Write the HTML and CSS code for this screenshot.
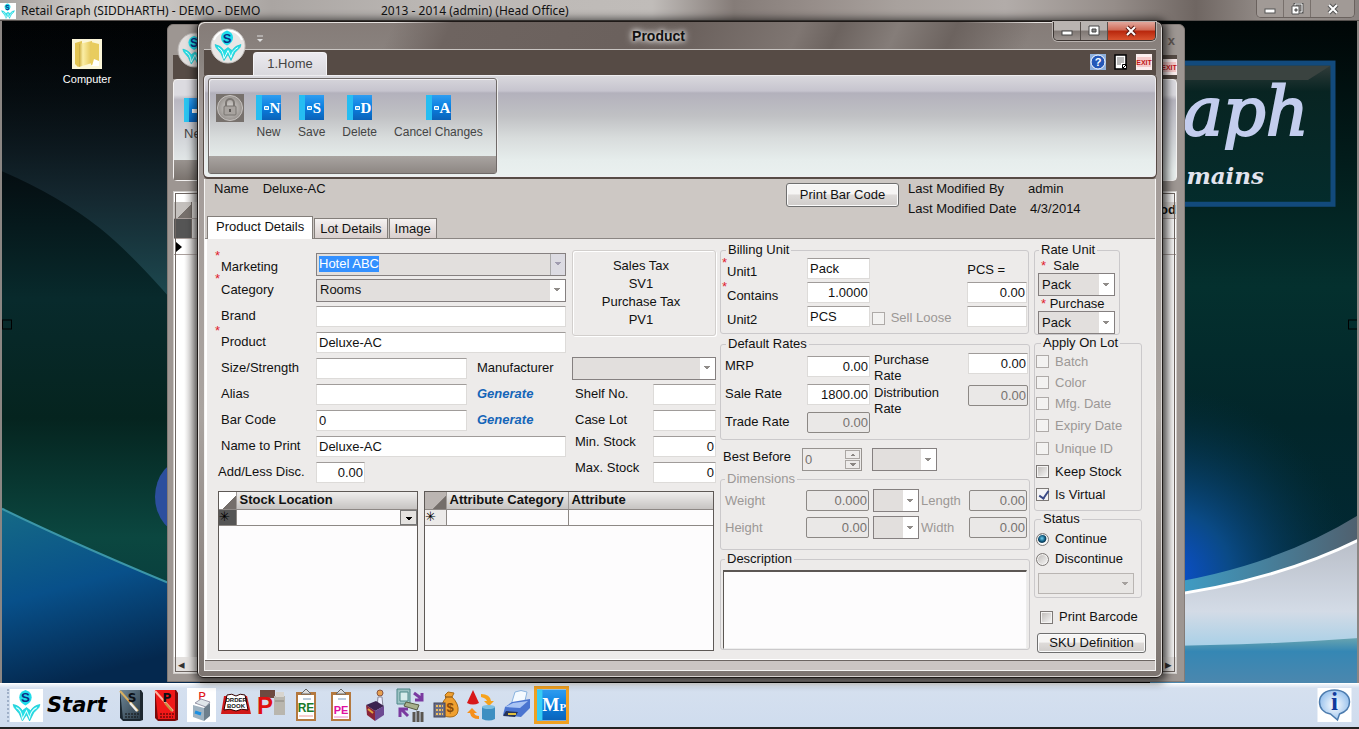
FILE: index.html
```html
<!DOCTYPE html>
<html lang="en">
<head>
<meta charset="utf-8">
<title>Retail Graph</title>
<link rel="stylesheet" href="styles.css">
</head>
<body>
<svg class="defs" aria-hidden="true">
  <defs>
    <linearGradient id="book" x1="0" y1="0" x2="0" y2="1"><stop offset="0" stop-color="#2f9df0"/><stop offset=".5" stop-color="#0a7fe0"/><stop offset="1" stop-color="#0b62b8"/></linearGradient>
    <linearGradient id="folder" x1="0" y1="0" x2="1" y2="0"><stop offset="0" stop-color="#c9a93a"/><stop offset=".3" stop-color="#fbeea6"/><stop offset="1" stop-color="#e3c452"/></linearGradient>
    <radialGradient id="coin"><stop offset="0" stop-color="#d9d6d3"/><stop offset="1" stop-color="#97928e"/></radialGradient>
    <linearGradient id="dark" x1="0" y1="0" x2="1" y2="1"><stop offset="0" stop-color="#6f8798"/><stop offset="1" stop-color="#2c3c48"/></linearGradient>
    <radialGradient id="bubble"><stop offset="0" stop-color="#ffffff"/><stop offset="1" stop-color="#9cc4ee"/></radialGradient>
    <symbol id="logo" viewBox="0 0 32 32">
      <path d="M15 1q6 2 6 7 0 5-6 8-6-3-6-8 0-5 6-7z" fill="#1fdcea"/>
      <path d="M3 15q6 1 9 6l4-3 4 3q3-5 9-6l-1 3-5 5-4 8-3-6-4 6-3-7-5-6z" fill="#27dfe6" stroke="#0cc0cc" stroke-width=".6"/>
      <path d="M6 18q5 2 6 11l4-8 3 7q1-7 7-10" fill="none" stroke="#eaffff"/>
      <text x="15" y="13" text-anchor="middle" class="logo-s">S</text>
    </symbol>
    <symbol id="help" viewBox="0 0 16 16"><rect width="16" height="16" fill="#8fb0dc"/><circle cx="8" cy="8" r="7" fill="#2458b8" stroke="#fff"/><text x="8" y="12" text-anchor="middle" class="t-help">?</text></symbol>
    <symbol id="exit" viewBox="0 0 16 16"><rect width="16" height="16" fill="#fbeeee"/><path d="M1 3h14v10H1z" fill="#f6caca"/><text x="8" y="11" text-anchor="middle" class="t-exit">EXIT</text></symbol>
  </defs>
</svg>

<header class="appbar">
  <svg class="appbar-logo"><rect width="100%" height="100%" fill="#fff"/><use href="#logo"/></svg>
  <span class="appbar-name">Retail Graph (SIDDHARTH) - DEMO - DEMO</span>
  <span class="appbar-year">2013 - 2014 (admin) (Head Office)</span>
  <div class="winctl winctl-dim">
    <button aria-label="Minimize"><svg viewBox="0 0 14 12"><rect x="2" y="6" width="10" height="4" fill="#fff" stroke="#555"/></svg></button>
    <button aria-label="Restore"><svg viewBox="0 0 14 12"><path d="M5 1h7v8H5z" fill="none" stroke="#555" stroke-width="3"/><path d="M5 1h7v8H5z" fill="none" stroke="#fff"/><path d="M2 3h7v8H2z" fill="#fff" stroke="#555"/><path d="M5 6h2v2H5z" fill="#888" stroke="#555"/></svg></button>
    <button aria-label="Close"><svg viewBox="0 0 14 12"><path d="M3 2l8 8M11 2l-8 8" stroke="#555" stroke-width="4"/><path d="M3 2l8 8M11 2l-8 8" stroke="#fff" stroke-width="2"/></svg></button>
  </div>
</header>

<main class="desktop">
  <svg class="wallpaper" viewBox="0 0 1359 661" preserveAspectRatio="none" aria-hidden="true">
    <defs>
      <linearGradient id="w1" x1="0" y1="0" x2="0" y2="1"><stop offset="0" stop-color="#010304"/><stop offset=".2" stop-color="#04090d"/><stop offset=".42" stop-color="#082a2c"/><stop offset=".6" stop-color="#05241f"/><stop offset=".78" stop-color="#0b4740"/><stop offset="1" stop-color="#06303a"/></linearGradient>
      <linearGradient id="w2" x1="0" y1="0" x2="0" y2="1"><stop offset="0" stop-color="#04080b" stop-opacity="0"/><stop offset=".55" stop-color="#14262e"/><stop offset="1" stop-color="#20555c"/></linearGradient>
      <linearGradient id="w3" x1="0" y1="0" x2=".3" y2="1"><stop offset="0" stop-color="#156a86"/><stop offset=".5" stop-color="#08508a"/><stop offset="1" stop-color="#04284e"/></linearGradient>
      <linearGradient id="w4" x1="0" y1="0" x2="0" y2="1"><stop offset="0" stop-color="#000606"/><stop offset=".4" stop-color="#04302e"/><stop offset=".6" stop-color="#02262a"/><stop offset="1" stop-color="#012a3c"/></linearGradient>
      <radialGradient id="w5" gradientUnits="userSpaceOnUse" cx="1165" cy="555" r="190"><stop offset="0" stop-color="#0b50d8"/><stop offset=".35" stop-color="#0a4a86"/><stop offset="1" stop-color="#04303f" stop-opacity="0"/></radialGradient>
      <linearGradient id="w6" x1="0" y1="0" x2="0" y2="1"><stop offset="0" stop-color="#b9bec8"/><stop offset=".5" stop-color="#d3dbe6"/><stop offset="1" stop-color="#7cc4e8"/></linearGradient>
      <linearGradient id="w7" x1="0" y1="0" x2="0" y2="1"><stop offset="0" stop-color="#68a4b0"/><stop offset=".3" stop-color="#3587b4"/><stop offset="1" stop-color="#4b87ae"/></linearGradient>
      <linearGradient id="w8" x1="0" y1="0" x2="1" y2="0"><stop offset="0" stop-color="#3ba7d4"/><stop offset="1" stop-color="#50606e"/></linearGradient>
      <linearGradient id="w9" x1="0" y1="0" x2="0" y2="1"><stop offset="0" stop-color="#343e3c"/><stop offset=".2" stop-color="#082422"/><stop offset="1" stop-color="#042c2c"/></linearGradient>
    </defs>
    <rect width="200" height="661" fill="url(#w1)"/>
    <path d="M2 150Q60 175 100 207T200 312V0H2z" fill="url(#w2)"/>
    <path d="M2 487Q80 525 200 574V661H2z" fill="url(#w3)"/>
    <path d="M2 487Q80 525 200 574" fill="none" stroke="#3c96a8" stroke-width="2"/>
    <ellipse cx="187" cy="475" rx="32" ry="38" fill="#2c4f9e"/>
    <rect x="1150" width="209" height="661" fill="url(#w4)"/>
    <rect x="1150" y="280" width="209" height="381" fill="url(#w5)"/>
    <rect x="1000" y="42" width="333" height="141" fill="url(#w9)" stroke="#124a7c" stroke-width="5"/>
    <path d="M1000 45h330l-22 14h-308z" fill="#3a4340"/>
    <path d="M1150 564Q1270 548 1359 493V661H1150z" fill="url(#w8)"/>
    <path d="M1150 576Q1270 562 1359 518V661H1150z" fill="url(#w6)"/>
    <path d="M1150 576Q1270 562 1359 518" fill="none" stroke="#fff" stroke-width="3"/>
    <path d="M1150 624Q1250 624 1359 616V661H1150z" fill="url(#w7)"/>
    <text x="1309" y="114" text-anchor="end" class="brand-big">aph</text>
    <text x="1264" y="163" text-anchor="end" class="brand-small">mains</text>
    <path d="M2.500 298.500h9v9h-9zM1348.500 298.500h9v9h-9z" fill="none" stroke="#000"/>
    <path d="M1 0v661M1358 0v661" stroke="#8b8683" stroke-width="2"/>
  </svg>

  <a class="shortcut" href="#computer">
    <svg viewBox="0 0 30 30"><rect width="30" height="30" fill="#fbf6d8"/><path d="M3 4l7-2v24l-4 2-3-3z" fill="#e2c452"/><path d="M7 5l13-3v22l-13 4z" fill="url(#folder)"/><path d="M19 3l8 2v20l-8 1z" fill="#e8cc5e"/><path d="M22 20l5 2v5h-7z" fill="#fff"/></svg>
    <span>Computer</span>
  </a>

  <section class="window window-back" aria-label="List">
    <div class="back-title"><span class="back-x">x</span></div>
    <svg class="back-orb" viewBox="0 0 36 36"><circle cx="18" cy="18" r="17" fill="#e3e0df" stroke="#b8b4b1"/><use href="#logo" x="3" y="2" width="30" height="32"/></svg>
    <div class="back-strip"><svg class="ico16"><use href="#exit"/></svg></div>
    <div class="back-ribbon">
      <div class="back-ribbon-tool"><svg viewBox="0 0 24 24"><rect width="24" height="24" fill="url(#book)"/><rect width="5" height="24" fill="#2bc4f0"/><path d="M8 11h5v4H8z" fill="#fff"/></svg><span>New</span></div>
      <div class="back-ribbon-cap"></div>
    </div>
    <div class="back-list">
      <div class="back-row back-head"><i></i><span>od</span></div>
      <div class="back-row back-filter"><i></i><span></span></div>
      <div class="back-row back-cursor"><i></i><span></span></div>
      <div class="back-scroll"><span>◂</span><span>▸</span></div>
    </div>
  </section>

  <section class="window window-front" aria-label="Product">
    <svg class="orb" viewBox="0 0 36 36"><circle cx="18" cy="18" r="17" fill="#e9e7e6" stroke="#c9c5c2"/><path d="M4 12a15 15 0 0 1 28 0" fill="none" stroke="#fff" stroke-width="2"/><use href="#logo" x="2" y="1" width="32" height="33"/></svg>
    <div class="titlebar">
      <svg class="qat" viewBox="0 0 8 8"><path d="M1 1h6" stroke="#ddd"/><path d="M1 4h6L4 7z" fill="#ddd"/></svg>
      <h1>Product</h1>
      <div class="winctl">
        <button aria-label="Minimize"><svg viewBox="0 0 14 12"><rect x="2" y="6" width="10" height="4" fill="#fff" stroke="#444"/></svg></button>
        <button aria-label="Maximize"><svg viewBox="0 0 14 12"><path d="M2 1h10v9H2z" fill="#fff" stroke="#444"/><path d="M5 4h4v3H5z" fill="#888" stroke="#444"/></svg></button>
        <button class="close" aria-label="Close"><svg viewBox="0 0 14 12"><path d="M3 2l8 8M11 2l-8 8" stroke="#5b1a12" stroke-width="4"/><path d="M3 2l8 8M11 2l-8 8" stroke="#fff" stroke-width="2"/></svg></button>
      </div>
    </div>
    <div class="strip">
      <button class="ribbon-tab">1.Home</button>
      <div class="strip-icons">
        <svg class="ico16"><use href="#help"/></svg>
        <svg class="ico16" viewBox="0 0 16 16"><path d="M2 1h11v14H2z" fill="#fff" stroke="#000" stroke-width="1.500"/><path d="M4 4h7M4 6h7M4 8h7M4 10h4" stroke="#777"/><path d="M9.500 10.500h4v4h-4z" fill="#fff" stroke="#000"/><path d="M10 14l3-3" stroke="#000"/></svg>
        <svg class="ico16"><use href="#exit"/></svg>
      </div>
    </div>
    <div class="ribbon">
      <div class="group">
        <div class="tools">
          <svg class="lock" viewBox="0 0 28 28"><rect width="28" height="28" fill="#77716d"/><circle cx="14" cy="14" r="12.500" fill="url(#coin)" stroke="#c8c4c1"/><path d="M10 13V9a4 4 0 0 1 8 0v4" fill="none" stroke="#7b7672" stroke-width="2"/><rect x="8" y="12" width="12" height="9" rx="1" fill="#a8a39f" stroke="#77726e"/><path d="M14 15v3" stroke="#5c5855" stroke-width="2"/></svg>
          <button class="tool"><svg viewBox="0 0 25 25"><rect width="25" height="25" fill="url(#book)"/><rect width="6" height="25" fill="#25bdf2"/><path d="M8.500 11.500h4v3h-4z" fill="#5ab4f5" stroke="#fff"/><text x="19" y="18" text-anchor="middle" class="t-book">N</text></svg>New</button>
          <button class="tool"><svg viewBox="0 0 25 25"><rect width="25" height="25" fill="url(#book)"/><rect width="6" height="25" fill="#25bdf2"/><path d="M8.500 11.500h4v3h-4z" fill="#5ab4f5" stroke="#fff"/><text x="18" y="18" text-anchor="middle" class="t-book">S</text></svg>Save</button>
          <button class="tool"><svg viewBox="0 0 25 25"><rect width="25" height="25" fill="url(#book)"/><rect width="6" height="25" fill="#25bdf2"/><path d="M8.500 11.500h4v3h-4z" fill="#5ab4f5" stroke="#fff"/><text x="19" y="18" text-anchor="middle" class="t-book">D</text></svg>Delete</button>
          <button class="tool"><svg viewBox="0 0 25 25"><rect width="25" height="25" fill="url(#book)"/><rect width="6" height="25" fill="#25bdf2"/><path d="M8.500 11.500h4v3h-4z" fill="#5ab4f5" stroke="#fff"/><text x="19" y="18" text-anchor="middle" class="t-book">A</text></svg>Cancel Changes</button>
        </div>
        <div class="group-cap"></div>
      </div>
    </div>

    <div class="client">
      <div class="head">
        <div class="head-left">
          <p class="head-name"><span>Name</span><span>Deluxe-AC</span></p>
          <div class="tabs" role="tablist">
            <button class="tab tab-on" role="tab" aria-selected="true">Product Details</button>
            <button class="tab" role="tab">Lot Details</button>
            <button class="tab" role="tab">Image</button>
          </div>
        </div>
        <div class="head-right">
          <button class="btn btn-print">Print Bar Code</button>
          <dl class="modified"><dt>Last Modified By</dt><dd>admin</dd><dt>Last Modified Date</dt><dd>4/3/2014</dd></dl>
        </div>
      </div>

      <form class="panel">
        <div class="col-main">
          <div class="fields">
            <label class="l low" for="mk"><b class="req">*</b>Marketing</label>
            <div class="combo wide"><input id="mk" value="Hotel ABC" autofocus><button type="button" aria-label="Open list"></button></div>
            <div class="tax"><span>Sales Tax</span><span>SV1</span><span>Purchase Tax</span><span>PV1</span></div>

            <label class="l" for="cat"><b class="req">*</b>Category</label>
            <select id="cat" class="sel wide"><option>Rooms</option></select>

            <label class="l" for="br">Brand</label><input id="br" class="in wide">
            <label class="l" for="pr"><b class="req">*</b>Product</label><input id="pr" class="in wide" value="Deluxe-AC">

            <label class="l" for="sz">Size/Strength</label><input id="sz" class="in">
            <label class="mid" for="mf">Manufacturer</label><select id="mf" class="sel span2"><option></option></select>

            <label class="l" for="al">Alias</label><input id="al" class="in">
            <a class="mid gen" href="#alias">Generate</a><label class="r" for="sh">Shelf No.</label><input id="sh" class="in">

            <label class="l" for="bc">Bar Code</label><input id="bc" class="in" value="0">
            <a class="mid gen" href="#barcode">Generate</a><label class="r" for="cl">Case Lot</label><input id="cl" class="in">

            <label class="l" for="np">Name to Print</label><input id="np" class="in wide" value="Deluxe-AC">
            <label class="r high" for="mi">Min. Stock</label><input id="mi" class="in num" value="0">

            <label class="l l-out" for="ad">Add/Less Disc.</label><input id="ad" class="in num disc" value="0.00">
            <label class="r high" for="ma">Max. Stock</label><input id="ma" class="in num" value="0">
          </div>
          <div class="grids">
            <div class="sheet">
              <table><thead><tr><th class="corner corner-w"></th><th>Stock Location</th></tr></thead>
              <tbody><tr><td class="star star-on">✳</td><td class="cell-drop"><button type="button" class="drop" aria-label="Choose location"></button></td></tr></tbody></table>
            </div>
            <div class="sheet">
              <table><thead><tr><th class="corner"></th><th class="cat">Attribute Category</th><th>Attribute</th></tr></thead>
              <tbody><tr><td class="star">✳</td><td></td><td></td></tr></tbody></table>
            </div>
          </div>
        </div>

        <div class="col-rates">
          <fieldset class="fs billing"><legend>Billing Unit</legend>
            <label for="u1"><b class="req">*</b>Unit1</label><input id="u1" class="in" value="Pack"><span></span><label class="pcs" for="pc">PCS =</label>
            <label for="co"><b class="req">*</b>Contains</label><input id="co" class="in num" value="1.0000"><span></span><input id="pc" class="in num" value="0.00">
            <label for="u2">Unit2</label><input id="u2" class="in" value="PCS"><label class="chk off"><input type="checkbox" disabled>Sell Loose</label><input class="in" aria-label="Loose unit">
          </fieldset>
          <fieldset class="fs rates"><legend>Default Rates</legend>
            <div class="rates-l">
              <label for="mrp">MRP</label><input id="mrp" class="in num" value="0.00">
              <label for="sr">Sale Rate</label><input id="sr" class="in num" value="1800.00">
              <label for="tr">Trade Rate</label><input id="tr" class="in num" value="0.00" disabled>
            </div>
            <div class="rates-r">
              <label for="pur">Purchase Rate</label><input id="pur" class="in num" value="0.00">
              <label for="dis">Distribution Rate</label><input id="dis" class="in num" value="0.00" disabled>
            </div>
          </fieldset>
          <div class="best">
            <label for="bb">Best Before</label>
            <div class="spin"><input id="bb" value="0" disabled><div><button type="button" aria-label="Up" disabled></button><button type="button" aria-label="Down" disabled></button></div></div>
            <select class="sel" aria-label="Period"><option></option></select>
          </div>
          <fieldset class="fs dims off"><legend>Dimensions</legend>
            <label for="we">Weight</label><input id="we" class="in num" value="0.000" disabled><select class="sel" aria-label="Weight unit"><option></option></select><label for="le">Length</label><input id="le" class="in num" value="0.00" disabled>
            <label for="he">Height</label><input id="he" class="in num" value="0.00" disabled><select class="sel" aria-label="Height unit"><option></option></select><label for="wi">Width</label><input id="wi" class="in num" value="0.00" disabled>
          </fieldset>
          <fieldset class="fs desc"><legend>Description</legend><textarea aria-label="Description"></textarea></fieldset>
        </div>

        <div class="col-side">
          <fieldset class="fs unit"><legend>Rate Unit</legend>
            <label for="us"><b class="star-in">*</b>&nbsp; Sale</label><select id="us" class="sel"><option>Pack</option></select>
            <label for="up"><b class="star-in">*</b> Purchase</label><select id="up" class="sel"><option>Pack</option></select>
          </fieldset>
          <fieldset class="fs lot"><legend>Apply On Lot</legend>
            <label class="chk off"><input type="checkbox" disabled>Batch</label>
            <label class="chk off"><input type="checkbox" disabled>Color</label>
            <label class="chk off"><input type="checkbox" disabled>Mfg. Date</label>
            <label class="chk off"><input type="checkbox" disabled>Expiry Date</label>
            <label class="chk off"><input type="checkbox" disabled>Unique ID</label>
            <label class="chk"><input type="checkbox">Keep Stock</label>
            <label class="chk"><input type="checkbox" checked>Is Virtual</label>
          </fieldset>
          <fieldset class="fs status"><legend>Status</legend>
            <label class="chk"><input type="radio" name="st" checked>Continue</label>
            <label class="chk"><input type="radio" name="st">Discontinue</label>
            <select class="sel sel-flat" aria-label="Reason" disabled><option></option></select>
          </fieldset>
          <label class="chk print"><input type="checkbox">Print Barcode</label>
          <button type="button" class="btn">SKU Definition</button>
        </div>
      </form>
      <div class="statusbar"></div>
    </div>
  </section>
</main>

<footer class="taskbar">
  <button class="start"><svg class="start-logo" viewBox="0 0 33 33"><rect width="33" height="33" fill="#fff"/><use href="#logo" width="33" height="33"/></svg>Start</button>
  <nav class="tasks">
    <button aria-label="Sales invoice"><svg viewBox="0 0 32 34"><path d="M5 2h21l2 3v27l-3 1H8l-3-3z" fill="#1c2730"/><path d="M5 2h20v29H8z" fill="url(#dark)"/><path d="M5 3l18 20" stroke="#d8b060" stroke-width="2"/><path d="M15 15l7 8" stroke="#eee" stroke-width="2"/><text x="17" y="14" text-anchor="middle" class="t-s">S</text><path d="M10 26h14M10 29h13" stroke="#111" stroke-dasharray="2 1"/></svg></button>
    <button aria-label="Purchase invoice"><svg viewBox="0 0 32 34"><path d="M5 2h21l2 3v27l-3 1H8l-3-3z" fill="#7a0a0a"/><path d="M5 2h20v29H8z" fill="#f01818"/><path d="M5 3l18 20" stroke="#ffb0a0" stroke-width="2"/><path d="M15 15l7 8" stroke="#c89040" stroke-width="2"/><text x="17" y="14" text-anchor="middle" class="t-s">P</text><path d="M10 26h14M10 29h13" stroke="#300" stroke-dasharray="2 1"/></svg></button>
    <button aria-label="Purchase bill"><svg viewBox="0 0 32 34"><rect x="2" width="29" height="34" fill="#fff"/><text x="17" y="13" text-anchor="middle" class="t-p">P</text><path d="M10 15l6-4 9 3-4 5z" fill="#dfe6ea" stroke="#99a"/><path d="M8 17l11 3v13l-11-4z" fill="#9fb2c0"/><path d="M19 20l6-5v13l-6 5z" fill="#6d7f8c"/><path d="M10 24l6 2" stroke="#1c8fe0" stroke-width="3"/></svg></button>
    <button aria-label="Order book"><svg viewBox="0 0 32 34"><path d="M4 8h23l4 18H1z" fill="#d01818"/><path d="M7 7q5-2 9 1 4-3 9-1l3 15q-7-2-12 1-6-3-12-1z" fill="#fff" stroke="#300"/><text x="16" y="14" text-anchor="middle" class="t-xs">ORDER</text><text x="16" y="20" text-anchor="middle" class="t-xs">BOOK</text></svg></button>
    <button aria-label="Purchase return"><svg viewBox="0 0 32 34"><path d="M5 2h15v8H5z" fill="#6e4a40"/><path d="M19 8h11v19H19z" fill="#b9b6ae"/><path d="M21 4h8v5h-8z" fill="#d8d5cf"/><path d="M20 13h9" stroke="#8a867e"/><text x="10" y="26" text-anchor="middle" class="t-pbig">P</text></svg></button>
    <button aria-label="Receipt entry"><svg viewBox="0 0 32 34"><rect x="6" y="4" width="20" height="29" fill="#b4793f"/><rect x="8" y="7" width="16" height="24" fill="#fff"/><path d="M11 6l5-5 5 5z" fill="#ddd" stroke="#666"/><path d="M13 11h8" stroke="#bcd" stroke-width="2"/><text x="16" y="24" text-anchor="middle" class="t-re">RE</text><path d="M9 28h14" stroke="#e99"/></svg></button>
    <button aria-label="Payment entry"><svg viewBox="0 0 32 34"><rect x="6" y="4" width="20" height="29" fill="#b4793f"/><rect x="8" y="7" width="16" height="24" fill="#fff"/><path d="M11 6l5-5 5 5z" fill="#ddd" stroke="#666"/><path d="M13 11h8" stroke="#bcd" stroke-width="2"/><text x="16" y="26" text-anchor="middle" class="t-pe">PE</text><path d="M9 29h14" stroke="#e8c"/></svg></button>
    <button aria-label="Cash box"><svg viewBox="0 0 32 34"><circle cx="20" cy="5" r="3" fill="#e6a050" stroke="#854"/><path d="M18 9h4l1 10h-6z" fill="#eef" stroke="#889"/><path d="M6 17l10-4 8 5-9 5z" fill="#3b2350"/><path d="M6 17l9 6v10l-8-6z" fill="#8a2438"/><path d="M15 23l9-5v9l-9 6z" fill="#6d4a92"/><path d="M8 21l5 4" stroke="#e0a040" stroke-width="2"/></svg></button>
    <button aria-label="Stock transfer"><svg viewBox="0 0 32 34"><path d="M2 1h13v15H2z" fill="#9cc3c4" stroke="#4d8788"/><path d="M5 4h8v9H5z" fill="#d7ecec" stroke="#4d8788"/><path d="M19 5l8 6m0-6v7h-7" fill="none" stroke="#7a3aa0" stroke-width="3"/><path d="M13 28l-6-6m-2 7v-8h8" fill="none" stroke="#7a3aa0" stroke-width="3"/><path d="M11 14l13 3-2 5-13-4z" fill="#a7b08c" stroke="#565c40"/><path d="M19 24v10M23 23v11M27 24v10" stroke="#5a5650" stroke-width="3"/></svg></button>
    <button aria-label="Accounts"><svg viewBox="0 0 32 34"><path d="M15 7l3-3 6 1-2 4q7 7 6 14-1 6-8 6t-9-5q0-9 5-14z" fill="#f0a030" stroke="#a86a14"/><path d="M15 9h7" stroke="#7a4a10"/><text x="20" y="24" text-anchor="middle" class="t-d">$</text><rect x="4" y="15" width="11" height="14" fill="#6b6e86" stroke="#44465a"/><path d="M6 18h7M6 22h7M6 26h7" stroke="#f0c060" stroke-width="2" stroke-dasharray="2 1"/></svg></button>
    <button aria-label="Shapes"><svg viewBox="0 0 32 34"><path d="M8 2l6 13q-6 3-12 0z" fill="#d81818"/><path d="M16 6q9 0 10 7h3l-5 5-5-5h3q-1-3-6-4z" fill="#f6a21c"/><path d="M14 31q-8 0-9-6H2l5-5 5 5H9q1 3 5 3z" fill="#f6901c"/><path d="M17 19q6-3 13 0v12q-6 3-13 0z" fill="#3e8fc2"/><ellipse cx="23.500" cy="19" rx="6.500" ry="2" fill="#7cbfe2"/></svg></button>
    <button aria-label="Print"><svg viewBox="0 0 32 34"><path d="M15 4q6-3 12 0l-3 13H11z" fill="#f4faff" stroke="#8ab4e0"/><path d="M5 19l7-5 18-3v9l-9 9-18-2z" fill="#4a74d0"/><path d="M5 19l8-4 15-2-8 7z" fill="#a9c4f4"/><path d="M6 23l12 1-3 5-12-1z" fill="#26345c"/><path d="M8 26l8 0" stroke="#e0c040" stroke-width="2"/></svg></button>
    <button class="active" aria-label="Product master"><svg viewBox="0 0 32 34"><rect width="32" height="34" fill="url(#book)"/><rect width="6" height="34" fill="#36cdf4"/><text x="19" y="24" text-anchor="middle" class="t-mp">M<tspan class="t-mp-s">P</tspan></text></svg></button>
  </nav>
  <button class="info" aria-label="Information"><svg viewBox="0 0 34 34"><rect width="34" height="34" fill="#fff"/><path d="M17 2c9 0 15 5 15 12 0 6-4 10-10 12l-2 6-7-6C6 25 2 20 2 14 2 7 8 2 17 2z" fill="url(#bubble)" stroke="#4d7cae" stroke-width="1.500"/><text x="17" y="22" text-anchor="middle" class="t-i">i</text></svg></button>
</footer>
<script src="app.js"></script>
</body>
</html>
```
FILE: app.js
```js
const first = document.getElementById("mk");
first.focus();
first.select();
```
FILE: styles.css
```css
* { box-sizing: border-box; }
body {
  margin: 0; min-height: 100vh; display: flex; flex-direction: column;
  font: 13px/16px "Liberation Sans", Arial, sans-serif; color: #111; background: #000;
}
button, input, select, textarea { font: inherit; color: inherit; margin: 0; padding: 0; border-radius: 0; min-width: 0; }
button { border: 0; background: none; }
.defs { position: absolute; width: 0; height: 0; }

/* application bar */
.appbar {
  display: flex; align-items: center; height: 21px; padding-right: 4px;
  font: 12px/20px "Noto Sans", "Open Sans", sans-serif;
  background: linear-gradient(90deg, #a8a4a1 0, #d8d5d2 8%, #aaa5a2 20%, #bcb8b5 32%, #c0bcb9 48%, #857c78 54%, #978e8a 60%, #a8a19d 66%, #b2aca9 74%, #958d89 82%, #6f6662 88%, #9a938f 94%, #8a8380 100%);
  box-shadow: inset 0 -1px #55504d;
}
.appbar-logo { width: 16px; height: 16px; margin-right: 5px; }
.appbar-name { width: 360px; white-space: nowrap; }
.appbar-year { flex: 1; white-space: nowrap; }
.winctl { display: flex; align-self: flex-start; height: 19px; border: 1px solid #3c3532; border-top: 0; border-radius: 0 0 5px 5px; overflow: hidden; box-shadow: 0 0 0 1px #b9b3b0; }
.winctl button { width: 27px; display: grid; place-items: center; border-right: 1px solid #57504c; background: linear-gradient(#b9b4b1 0 45%, #7f7773 50%, #9d9591); }
.winctl button:last-child { width: 47px; border-right: 0; }
.winctl svg { width: 14px; height: 12px; }
.winctl .close { background: linear-gradient(#e0a195 0 5%, #cf6a56 45%, #b8260c 50%, #d9532f); }
.winctl-dim { height: 18px; border-color: #6a625e; box-shadow: none; }
.winctl-dim button { background: #a19a96; border-color: #78706c; }
.winctl-dim button:last-child { width: 43px; }

/* desktop */
.desktop { position: relative; flex: 1; display: flex; flex-direction: column; padding: 0 196px 5px 197px; }
.wallpaper { position: absolute; inset: 0; width: 100%; height: 100%; }
.brand-big { font: italic 67px "DejaVu Serif", serif; fill: #c3cdee; stroke: #c3cdee; stroke-width: 2px; }
.brand-small { font: italic bold 23px "DejaVu Serif", serif; fill: #e2e4ee; }
.shortcut { position: absolute; left: 50px; top: 18px; width: 74px; display: flex; flex-direction: column; align-items: center; gap: 2px; color: #fff; text-decoration: none; font: 11px/16px "Liberation Sans", sans-serif; }
.shortcut svg { width: 30px; height: 30px; }

/* rear window */
.window-back {
  position: absolute; left: 167px; right: 174px; top: 3px; bottom: 1px;
  display: flex; flex-direction: column; padding: 0 7px 7px 5px;
  background: #9d9692; border: 1px solid #837b77; border-radius: 6px 6px 0 0;
}
.back-title { height: 30px; padding: 8px 2px; text-align: right; font-weight: bold; color: #5b5350; }
.back-orb { position: absolute; left: 9px; top: 7px; width: 36px; height: 36px; }
.back-strip { height: 24px; display: flex; justify-content: flex-end; align-items: center; background: #564b45; }
.ico16 { width: 16px; height: 16px; }
.back-ribbon { height: 102px; display: flex; flex-direction: column; border: 1px solid #f4f2f1; border-radius: 4px; background: linear-gradient(#dcdbe0 0 15%, #b9b7c1 20%, #e8eeed 90%); }
.back-ribbon-tool { flex: 1; padding: 18px 10px 0; color: #444; display: flex; flex-direction: column; gap: 4px; }
.back-ribbon-tool svg { width: 24px; height: 24px; }
.back-ribbon-cap { height: 20px; width: 60px; background: linear-gradient(#99938f, #7a736e); }
.back-list { flex: 1; margin-top: 10px; padding-top: 10px; display: flex; flex-direction: column; background: linear-gradient(90deg, #fff 10px, #b9b5b2 24px, #b9b5b2 calc(100% - 24px), #fff); border: 1px solid #cfcbc8; outline: 1px solid #6d6561; outline-offset: -3px; }
.back-row { display: flex; height: 16px; border-bottom: 1px solid #a89e9b; }
.back-row i { width: 18px; border-right: 1px solid #6d6561; }
.back-row span { flex: 1; text-align: right; font-weight: bold; }
.back-head { height: 17px; background: #d6d2cf; }
.back-head i { background: linear-gradient(135deg, #c4c0bd 60%, #77706c 60%); }
.back-filter { height: 20px; }
.back-filter i { background: #555; }
.back-cursor { align-items: center; }
.back-cursor i { width: 6px; height: 0; margin-left: 2px; border: solid transparent; border-width: 5px 0 5px 6px; border-left-color: #000; }
.back-scroll { margin-top: auto; display: flex; justify-content: space-between; padding: 0 4px; background: #e4e1df; color: #333; }

/* product window */
.window-front {
  position: relative; padding: 0 6px 6px; border: 1px solid #1f1a18; border-radius: 7px 7px 6px 6px;
  background: linear-gradient(180deg, #857c78 0, #8b8480 40px, #a39b98 90px, #aaa4a0 60%, #7c7470 100%);
  box-shadow: inset 1px 1px #e5e1de, inset -1px -1px #d8d4d1, 1px 1px 8px 3px rgba(0, 0, 0, .65);
}
.orb { position: absolute; left: 12px; top: 6px; width: 36px; height: 36px; }
.titlebar {
  display: flex; justify-content: space-between; height: 27px; margin: 0 -4px; padding: 0 4px 0 56px;
  background: linear-gradient(115deg, transparent 20%, #6e6460 26%, #6a605c 50%, #7f7672 62%, #6c635f 66%, #857d79 72%, #6c635f 78%, transparent 86%);
}
.qat { width: 8px; height: 8px; margin-top: 13px; }
.titlebar h1 { margin: 6px 0 0; font: bold 14px/16px "Liberation Sans", sans-serif; text-shadow: 0 0 8px #fff, 0 0 5px #fff; }
.strip { height: 26px; display: flex; align-items: flex-end; justify-content: space-between; padding: 0 4px 0 49px; background: #564b45; border-top: 1px solid #c9c5c2; }
.ribbon-tab { width: 74px; height: 23px; color: #444; border-radius: 4px 4px 0 0; background: linear-gradient(#eceaf0, #d9d8dd); border: 1px solid #f4f3f6; border-bottom: 0; }
.strip-icons { display: flex; gap: 7px; padding-bottom: 5px; }
.ribbon { padding: 2px 3px; border-radius: 4px; border: 1px solid #eeedf0; background: linear-gradient(#d9d8dd 0, #c6c4ce 15px, #b3b1bc 17px, #c0c1c4 40px, #d8dcdc 62px, #e6edec 84px, #eaf0ef); box-shadow: 0 0 0 1px #564b45, 0 2px #564b45; }
.group { width: 289px; border: 1px solid #6f6a68; border-radius: 3px; box-shadow: inset 1px 1px #f2f1f4, 1px 0 #eee; }
.tools { display: flex; gap: 17px; align-items: flex-start; height: 77px; padding: 15px 8px 0 7px; }
.lock { width: 28px; height: 28px; flex: none; margin-right: -5px; }
.tool { display: flex; flex-direction: column; align-items: center; gap: 5px; padding-top: 1px; color: #444; white-space: nowrap; font-size: 12px; line-height: 15px; }
.tool svg { width: 25px; height: 25px; }
.group-cap { height: 17px; background: linear-gradient(#a9a4a1, #8d8783); }

/* client area */
.client { margin-top: 2px; border: 1px solid #f5f4f3; border-top: 0; background: #cdc8c4; }
.head { display: flex; justify-content: space-between; height: 60px; border-bottom: 1px solid #8b8683; }
.head-left { display: flex; flex-direction: column; justify-content: space-between; }
.head-name { margin: 0; padding: 2px 0 0 9px; display: flex; gap: 14px; }
.tabs { display: flex; align-items: flex-end; gap: 1px; margin: 0 0 -1px 2px; }
.tab { height: 21px; padding: 0 5px; border: 1px solid #837e7a; background: linear-gradient(#f5f2f1, #d8cfcd); white-space: nowrap; }
.tab-on { height: 23px; padding: 0 8px 2px; background: #fff; border-bottom: 0; }
.head-right { display: flex; width: 369px; gap: 9px; }
.btn { height: 20px; border: 1px solid #6f6f6f; border-radius: 3px; background: linear-gradient(#f6f5f4 0 45%, #dedbd9 50%, #cfccca); box-shadow: inset 0 0 0 1px #fbfbfb; }
.btn-print { width: 113px; height: 24px; margin-top: 4px; }
.modified { display: grid; grid-template-columns: 120px auto; row-gap: 4px; align-content: start; margin: 2px 0 0; white-space: nowrap; }
.modified dd { margin: 0; }
.modified dd:last-child { padding-left: 2px; }
.panel { display: grid; grid-template-columns: 500fr 310fr 112fr; column-gap: 4px; align-items: start; padding: 3px 9px 6px; background: #edebea; border: 0 solid #fff; border-width: 0 0 1px 2px; }
.statusbar { height: 10px; background: #cbc5c3; border-top: 1px solid #6c6562; }

/* shared controls */
.in { height: 21px; width: 100%; padding: 1px 2px; border: 1px solid #dddbd9; border-top-color: #a09c9a; background: #fff; }
.num { text-align: right; padding-right: 1px; }
.in:disabled { background: #eae8e7; color: #77726f; border-color: #8c8885; border-radius: 2px; }
.sel {
  appearance: none; height: 23px; width: 100%; padding: 0 16px 0 3px; border: 1px solid #858080; border-radius: 0;
  background:
    linear-gradient(45deg, transparent 50%, #908c89 51%) right 8px center / 4px 4px no-repeat,
    linear-gradient(-45deg, transparent 50%, #908c89 51%) right 4px center / 4px 4px no-repeat,
    linear-gradient(#fff, #fff) right / 15px 100% no-repeat, #e2dfdd;
}
.sel-flat { opacity: 1; border-color: #b9b5b2; background:
    linear-gradient(45deg, transparent 50%, #a5a19e 51%) right 8px center / 4px 4px no-repeat,
    linear-gradient(-45deg, transparent 50%, #a5a19e 51%) right 4px center / 4px 4px no-repeat, #e8e6e4; }
.req, .star-in { color: #e0202c; font-weight: 400; }
.req { position: absolute; left: -6px; top: -11px; }
.off { color: #9c9896; }
.chk { display: flex; align-items: center; gap: 6px; white-space: nowrap; }
.chk input { appearance: none; flex: none; width: 13px; height: 13px; border: 1px solid #7d7977; background: linear-gradient(135deg, #bdb9b6, #f8f8f8); box-shadow: inset 0 0 0 1px #f4f3f2; }
.chk input:disabled { border-color: #aeaaa8; background: #f3f2f1; }
.chk input[type=radio] { border-radius: 50%; }
.chk input[type=radio]:checked { background: radial-gradient(circle at 45% 40%, #6fd0f0 0, #105a80 3px, #0d3c58 4px, #fff 5px); }
.chk input[type=checkbox]:checked { background: #f4f4f6; }
.chk input[type=checkbox]:checked::after { content: ""; display: block; width: 4px; height: 8px; margin: 0 0 0 4px; border: solid #3b4a86; border-width: 0 2px 2px 0; transform: rotate(35deg); }

/* left fields */
.fields { display: grid; grid-template-columns: 100px 151fr 105fr 81px 63fr; grid-auto-rows: 26px; align-items: center; padding-top: 9px; }
.l { position: relative; grid-column: 1; margin-left: 5px; white-space: nowrap; }
.l-out { margin-left: 2px; }
.low { align-self: end; padding-bottom: 2px; }
.wide { grid-column: 2 / 4; width: auto; margin-right: 6px; }
.span2 { grid-column: 4 / 6; }
.mid { padding-left: 10px; }
.r { grid-column: 4; padding-left: 3px; }
.high { align-self: start; padding-top: 1px; }
.disc { width: 49px; }
.gen { color: #1565b8; font-weight: bold; font-style: italic; text-decoration: none; }
.tax { grid-column: 4 / 6; grid-row: 1 / 5; align-self: start; height: 86px; margin-top: -1px; display: flex; flex-direction: column; align-items: center; justify-content: center; gap: 2px; padding-right: 6px; border: 1px solid #d2cfcd; border-radius: 3px; box-shadow: inset 1px 1px #fff, 1px 1px #fff; }
.combo { display: flex; height: 23px; border: 1px solid #858080; background: #e2dfdd; }
.combo input { flex: 1; border: 0; padding: 0 2px; background: none; outline: 0; }
.combo input::selection { background: #3390ff; color: #fff; }
.combo button { width: 15px; border-left: 1px solid #aaa; background:
    linear-gradient(45deg, transparent 50%, #a09cb0 51%) right 7px center / 4px 4px no-repeat,
    linear-gradient(-45deg, transparent 50%, #a09cb0 51%) right 3px center / 4px 4px no-repeat, #dcdbe2; }

.grids { display: grid; grid-template-columns: 200fr 290fr; gap: 6px; margin: 6px 2px 0; }
.sheet { height: 160px; border: 1px solid #5e5956; background: #fdfcfd; }
.sheet table { width: 100%; border-collapse: collapse; table-layout: fixed; }
.sheet th { height: 17px; padding: 0 3px; text-align: left; white-space: nowrap; background: linear-gradient(#efeeed, #c6c3c1); border-right: 1px solid #a09b98; border-bottom: 1px solid #8d8885; }
.sheet td { height: 16px; padding: 0; border: solid #8d8885; border-width: 0 1px 1px 0; line-height: 14px; }
.sheet tr > :last-child { border-right: 0; }
.sheet .corner { width: 21px; background: linear-gradient(135deg, #bbb5b2 65%, #746e6a 66%); }
.sheet .corner-w { width: 17px; background: linear-gradient(135deg, #fff 60%, #746e6a 61%); }
.sheet .cat { width: 122px; }
.star { font-size: 13px; background: #eceae9; color: #000; }
.sheet .star-on { background: #555; }
.cell-drop { text-align: right; }
.drop { display: block; width: 17px; height: 15px; margin-left: auto; border: 1px solid #777; background:
    linear-gradient(45deg, transparent 50%, #000 51%) 4px 6px / 4px 4px no-repeat,
    linear-gradient(-45deg, transparent 50%, #000 51%) 8px 6px / 4px 4px no-repeat, #e4e2e0; }

/* group boxes */
.fs { margin: 0; min-width: 0; padding: 0; border: 1px solid #cbc9cb; border-radius: 3px; }
.fs legend { margin-left: 5px; padding: 0 2px; white-space: nowrap; }
.billing { display: grid; grid-template-columns: 80px 63fr 98fr 60fr 1px; grid-auto-rows: 24px; padding: 0 0 3px 6px; margin-right: 1px; }
.billing > legend { margin-left: -1px; }
.billing > label:not(.chk) { position: relative; align-self: end; padding-bottom: 2px; grid-column: 1; }
.billing > .pcs.pcs { grid-column: 4; align-self: center; padding: 0; }
.billing .req { left: -5px; top: -9px; }
.billing > .chk { padding-left: 2px; align-self: center; }
.rates { margin-top: 2px; padding: 0 1px 3px 4px; display: flex; gap: 4px; }
.rates > legend { margin-left: 1px; }
.rates-l { flex: 145; display: grid; grid-template-columns: 82px 1fr; grid-auto-rows: 28px; align-items: center; }
.rates-r { flex: 154; display: grid; grid-template-columns: 94px 1fr; align-content: start; align-items: start; row-gap: 1px; }
.rates-r label { width: 80px; }
.rates-r .in { margin-top: 1px; }
.rates-r .in:disabled { margin: 0; }
.best { display: grid; grid-template-columns: 79px 70px 65px; height: 31px; padding: 8px 0 0 3px; }
.best label { width: 80px; padding-top: 1px; white-space: nowrap; }
.spin { display: flex; width: 60px; height: 23px; padding: 1px; border: 1px solid #979390; }
.spin input { flex: 1; width: 0; border: 0; background: none; color: #77726f; padding-left: 1px; }
.spin div { display: flex; flex-direction: column; width: 15px; gap: 1px; }
.spin button { flex: 1; border: 1px solid #aaa6a3; background: conic-gradient(from 135deg at 50% 0, #8a8683 90deg, transparent 0) center / 6px 3px no-repeat; }
.spin button:first-child { background: conic-gradient(from 135deg at 50% 0, #8a8683 90deg, transparent 0) center / 6px 3px no-repeat; }
.spin button:last-child { background: conic-gradient(from -45deg at 50% 100%, #8a8683 90deg, transparent 0) center / 6px 3px no-repeat; }
.dims { display: grid; grid-template-columns: 81px 63fr 4px 46fr 50fr 58fr; grid-auto-rows: 27px; align-items: center; padding: 0 2px 8px 4px; }
.dims > legend { margin-left: 0; }
.dims select { grid-column: 4; }
.dims label:nth-of-type(odd) { grid-column: 1; }
.dims label:nth-of-type(even) { padding-left: 2px; }
.desc { margin-top: 1px; padding: 3px 2px 0; }
.desc > legend { margin-left: 2px; }
.desc textarea { display: block; width: 100%; height: 79px; resize: none; border: 1px solid #eee; border-left-color: #5c5754; border-top: 2px solid #5c5754; background: #fdfcfd; }

/* right column */
.col-side { display: flex; flex-direction: column; }
.unit { width: 86px; padding: 0 3px; }
.unit > legend { margin-left: 1px; }
.unit label { display: block; padding-left: 3px; line-height: 15px; white-space: nowrap; }
.unit .sel { display: block; width: 77px; }
.lot { width: 108px; padding: 0 1px 4px; display: grid; grid-template-rows: repeat(3, 21px) repeat(4, 23px); }
.status { width: 108px; padding: 2px 3px 3px 1px; }
.status .chk { height: 20px; }
.status .sel { width: 96px; height: 21px; margin: 4px 0 0 2px; display: block; }
.print { margin: 11px 0 0 6px; height: 16px; }
.col-side .btn { margin: 8px 0 0 3px; }

/* taskbar */
.taskbar { display: flex; align-items: center; height: 46px; padding: 0 7px 1px 7px; background: linear-gradient(#f4f7fb, #d5e0ef 4px, #cfdcee); border-top: 1px solid #fff; border-bottom: 2px solid #222; }
.start { display: flex; align-items: center; gap: 4px; border-left: 2px dotted #9fb0c8; padding-left: 1px; font: italic bold 21px/24px "DejaVu Sans", sans-serif; color: #000; }
.start-logo { width: 33px; height: 33px; }
.tasks { display: flex; flex: 1; margin-left: 7px; }
.tasks button { width: 35px; height: 38px; display: grid; place-items: center; }
.tasks svg { width: 32px; height: 34px; }
.tasks .active { border: 3px solid #f0a020; }
.tasks .active svg { width: 29px; height: 32px; }
.info svg { width: 35px; height: 34px; display: block; }

/* lettering inside icons */
.logo-s { font: bold 13px "Liberation Sans", sans-serif; fill: #0b2f86; }
.t-help { font: bold 11px "Liberation Sans", sans-serif; fill: #fff; }
.t-exit { font: bold 7px "Liberation Sans", sans-serif; fill: #c01818; }
.t-book { font: bold 15px "Liberation Serif", serif; fill: #fff; }
.t-s { font: bold 12px "DejaVu Sans", sans-serif; fill: #0b1016; }
.t-p { font: 13px "DejaVu Sans", sans-serif; fill: #e01818; }
.t-xs { font: bold 6px "Liberation Sans", sans-serif; fill: #111; }
.t-pbig { font: bold 24px "Liberation Sans", sans-serif; fill: #e01010; }
.t-re { font: bold 12px "Liberation Sans", sans-serif; fill: #1a7a2a; }
.t-pe { font: bold 11px "Liberation Sans", sans-serif; fill: #e010a0; }
.t-d { font: bold 13px "Liberation Sans", sans-serif; fill: #8a4a08; }
.t-mp { font: bold 20px "Liberation Serif", serif; fill: #fff; }
.t-mp-s { font-size: 12px; }
.t-i { font: bold 25px "Liberation Serif", serif; fill: #123a9c; }
```
